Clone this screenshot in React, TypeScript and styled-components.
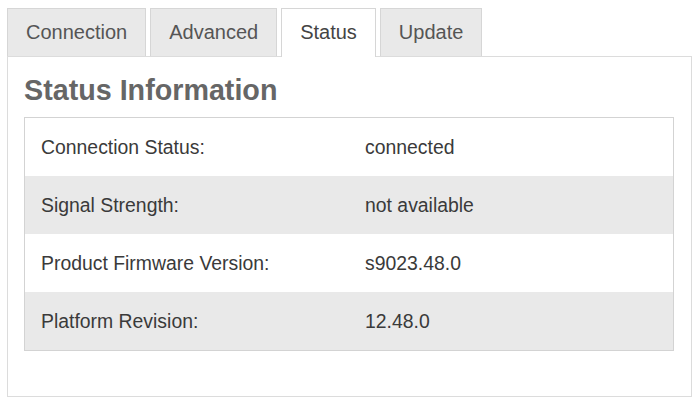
import React, { useState } from "react";
import styled, { createGlobalStyle } from "styled-components";

const GlobalStyle = createGlobalStyle`
  html, body {
    margin: 0;
    padding: 0;
    background: #fff;
  }
  body {
    font-family: "Liberation Sans", Arial, sans-serif;
  }
`;

const StyledPage = styled.div`
  padding: 8px 1px 0 7px;
`;

const StyledTabBar = styled.div`
  display: flex;
  gap: 4px;
  position: relative;
  z-index: 1;
`;

const StyledTab = styled.button<{ $active: boolean }>`
  font-family: inherit;
  font-size: 20px;
  line-height: 23px;
  color: ${(p) => (p.$active ? "#444" : "#555")};
  background: ${(p) => (p.$active ? "#fff" : "#e9e9e9")};
  border: 1px solid #d6d6d6;
  border-bottom: none;
  padding: 12px 18px ${(p) => (p.$active ? "13px" : "12px")};
  margin: 0 0 ${(p) => (p.$active ? "-1px" : "0")};
  cursor: pointer;
  outline: none;
`;

const StyledPanel = styled.div`
  border: 1px solid #dcdcdc;
  padding: 17px 17px 45px 16px;
`;

const StyledHeading = styled.h2`
  margin: 0 0 10px;
  font-size: 28.7px;
  line-height: 33px;
  font-weight: bold;
  color: #666;
`;

const StyledTable = styled.div`
  border: 1px solid #d3d3d3;
`;

const StyledRow = styled.div<{ $shaded: boolean }>`
  display: grid;
  grid-template-columns: 1fr 1fr;
  align-items: center;
  height: 58px;
  background: ${(p) => (p.$shaded ? "#e9e9e9" : "#fff")};
`;

const StyledCell = styled.div`
  padding: 0 16px;
  font-size: 19.4px;
  color: #3a3a3a;
`;

const tabs = ["Connection", "Advanced", "Status", "Update"];

const statusRows: [string, string][] = [
  ["Connection Status:", "connected"],
  ["Signal Strength:", "not available"],
  ["Product Firmware Version:", "s9023.48.0"],
  ["Platform Revision:", "12.48.0"],
];

export default function App(): JSX.Element {
  const [activeTab, setActiveTab] = useState("Status");

  return (
    <StyledPage>
      <GlobalStyle />
      <StyledTabBar>
        {tabs.map((name) => (
          <StyledTab key={name} $active={name === activeTab} onClick={() => setActiveTab(name)}>
            {name}
          </StyledTab>
        ))}
      </StyledTabBar>
      <StyledPanel>
        <StyledHeading>Status Information</StyledHeading>
        <StyledTable>
          {statusRows.map(([label, value], key) => (
            <StyledRow key={`status-row-${key}`} $shaded={key % 2 === 1}>
              <StyledCell>{label}</StyledCell>
              <StyledCell>{value}</StyledCell>
            </StyledRow>
          ))}
        </StyledTable>
      </StyledPanel>
    </StyledPage>
  );
}
